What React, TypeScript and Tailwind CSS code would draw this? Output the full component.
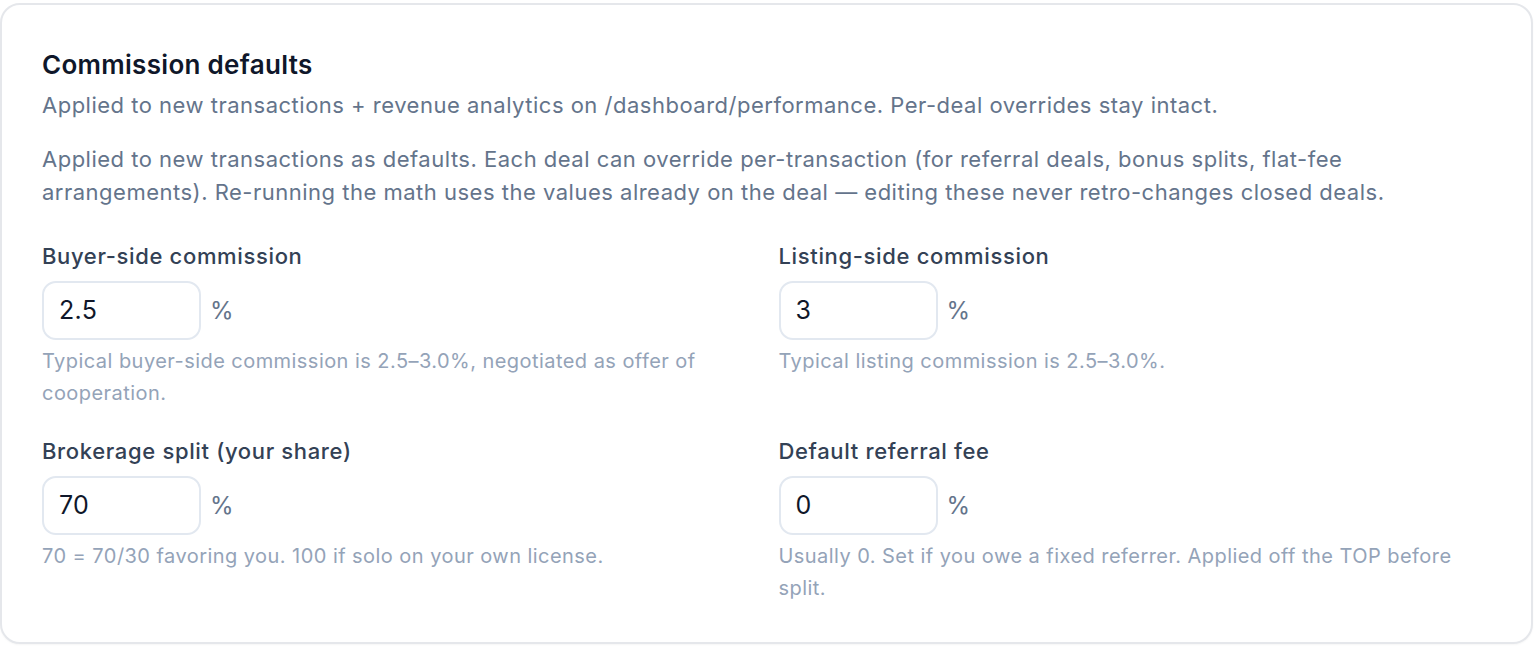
import React from "react";

const font = { fontFamily: "Inter, 'Noto Sans', sans-serif" };

function Field({ label, value, hint }: { label: string; value: string; hint: string }) {
  return (
    <div className="flex flex-col">
      <div className="text-[22px] leading-[32px] tracking-[0.65px] font-medium text-[#334155]">{label}</div>
      <div className="mt-[9px] flex items-center gap-[9px]">
        <div className="w-[159px] h-[59px] rounded-[14px] border-2 border-[#e2e8f0] bg-white flex items-center px-[15px] text-[25px] tracking-[0.3px] text-[#0f172a]">
          {value}
        </div>
        <span className="text-[24px] text-[#64748b]">%</span>
      </div>
      <div className="mt-[5px] text-[20px] leading-[32px] tracking-[0.45px] text-[#94a3b8]">{hint}</div>
    </div>
  );
}

export default function App() {
  return (
    <div className="bg-white min-h-[646px] pt-[3px] pl-0 pr-[3px]" style={font}>
      <div className="rounded-[20px] border-2 border-[#e5e7eb] bg-white pt-[43px] px-[40px] pb-[38px] shadow-[0_1px_2px_rgba(0,0,0,0.04)]">
        <h2 className="text-[26px] leading-[34px] tracking-[0.3px] font-semibold text-[#0f172a]">Commission defaults</h2>
        <p className="mt-[7px] text-[22px] leading-[33px] tracking-[0.5px] text-[#64748b]">
          Applied to new transactions + revenue analytics on /dashboard/performance. Per-deal overrides stay intact.
        </p>
        <p className="mt-[21px] text-[22px] leading-[33px] tracking-[0.5px] text-[#64748b]">
          Applied to new transactions as defaults. Each deal can override per-transaction (for referral deals, bonus splits, flat-fee arrangements). Re-running the math uses the values already on the deal — editing these never retro-changes closed deals.
        </p>
        <div className="mt-[31px] grid grid-cols-2 gap-x-[24px] gap-y-[26px]">
          <Field
            label="Buyer-side commission"
            value="2.5"
            hint="Typical buyer-side commission is 2.5–3.0%, negotiated as offer of cooperation."
          />
          <Field label="Listing-side commission" value="3" hint="Typical listing commission is 2.5–3.0%." />
          <Field
            label="Brokerage split (your share)"
            value="70"
            hint="70 = 70/30 favoring you. 100 if solo on your own license."
          />
          <Field
            label="Default referral fee"
            value="0"
            hint="Usually 0. Set if you owe a fixed referrer. Applied off the TOP before split."
          />
        </div>
      </div>
    </div>
  );
}
